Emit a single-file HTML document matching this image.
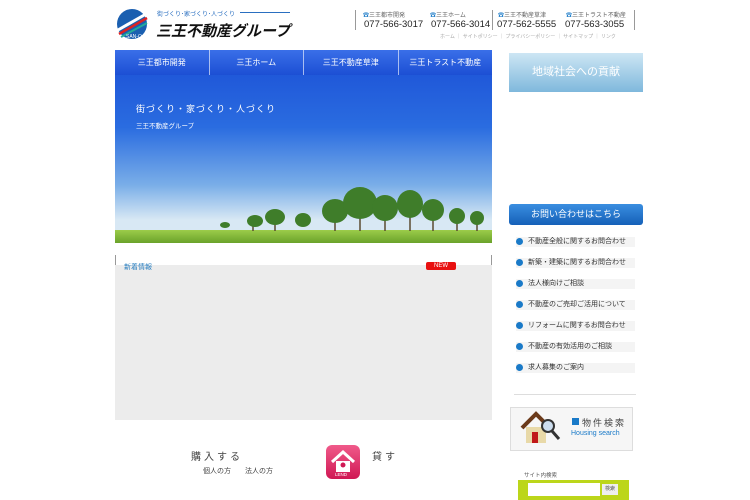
<!DOCTYPE html><html><head><meta charset="utf-8"><style>
*{margin:0;padding:0;box-sizing:border-box}
body{width:750px;height:500px;background:#fff;font-family:"Liberation Sans","Noto Sans CJK JP",sans-serif;position:relative;overflow:hidden}
.a{position:absolute}
.nav{left:115px;top:50px;width:377px;height:25px;display:flex}
.nav div{flex:1;color:#fff;font-size:8px;text-align:center;line-height:25px;border-right:1px solid rgba(255,255,255,.6)}
.nav div:last-child{border:none}
.tel{font-size:9.5px;color:#222;top:19px}
.tl{font-size:6px;color:#666;top:10px}
.side li{list-style:none;position:absolute;left:516px;width:119px;height:10px;font-size:7px;color:#333;line-height:10px;padding-left:12px;background:#f4f4f4}
.side li:before{content:"";position:absolute;left:0;top:1px;width:7px;height:7px;border-radius:50%;background:#1a7ac8}
</style></head><body>
<svg class="a" style="left:116px;top:8px" width="36" height="32"><circle cx="16" cy="16" r="15" fill="#1a5fb0"/><path d="M2 22 L30 6" stroke="#fff" stroke-width="3"/><path d="M3 26 L31 10" stroke="#d22" stroke-width="2.5"/><path d="M5 29 L31 15" stroke="#2a9" stroke-width="2"/><text x="10" y="30" font-size="5" fill="#fff" font-family="Liberation Sans">SAN-O</text></svg>
<div class="a" style="left:157px;top:9px;font-size:6px;color:#2a6fc0">街づくり･家づくり･人づくり</div>
<div class="a" style="left:240px;top:12px;width:50px;height:1px;background:#2a6fc0"></div>
<div class="a" style="left:156px;top:20px;font-size:15px;font-weight:bold;font-style:italic;color:#111">三王不動産グループ</div>
<div class="a" style="left:355px;top:10px;width:1px;height:20px;background:#999"></div>
<div class="a" style="left:492px;top:10px;width:1px;height:20px;background:#999"></div>
<div class="a" style="left:634px;top:10px;width:1px;height:20px;background:#999"></div>
<div class="a tl" style="left:363px"><span style="color:#1a7ac8">☎</span>三王都市開発</div>
<div class="a tl" style="left:430px"><span style="color:#1a7ac8">☎</span>三王ホーム</div>
<div class="a tl" style="left:498px"><span style="color:#1a7ac8">☎</span>三王不動産草津</div>
<div class="a tl" style="left:566px"><span style="color:#1a7ac8">☎</span>三王トラスト不動産</div>
<div class="a tel" style="left:364px">077-566-3017</div>
<div class="a tel" style="left:431px">077-566-3014</div>
<div class="a tel" style="left:497px">077-562-5555</div>
<div class="a tel" style="left:565px">077-563-3055</div>
<div class="a" style="left:440px;top:33px;font-size:5px;color:#aaa;white-space:nowrap">ホーム ｜ サイトポリシー ｜ プライバシーポリシー ｜ サイトマップ ｜ リンク</div>
<div class="a" style="left:115px;top:50px;width:377px;height:193px;background:linear-gradient(#1b4fd6 0%,#2a6ce0 40%,#7aaee8 70%,#d8e8f4 88%)"></div>
<div class="a" style="left:115px;top:230px;width:377px;height:13px;background:linear-gradient(#9ccc4a,#6aa22a)"></div>
<svg class="a" style="left:115px;top:175px" width="377" height="58"><g stroke="#5a4a30" stroke-width="1.5"><path d="M138 48V56M160 44V56M220 36V56M245 30V56M270 34V56M295 32V56M318 38V56M342 42V56M362 44V56"/></g><g fill="#3f7d2a"><ellipse cx="140" cy="46" rx="8" ry="6"/><ellipse cx="160" cy="42" rx="10" ry="8"/><ellipse cx="188" cy="45" rx="8" ry="7"/><ellipse cx="220" cy="36" rx="13" ry="12"/><ellipse cx="245" cy="28" rx="17" ry="16"/><ellipse cx="270" cy="33" rx="13" ry="13"/><ellipse cx="295" cy="29" rx="13" ry="14"/><ellipse cx="318" cy="35" rx="11" ry="11"/><ellipse cx="342" cy="41" rx="8" ry="8"/><ellipse cx="362" cy="43" rx="7" ry="7"/><ellipse cx="110" cy="50" rx="5" ry="3"/></g></svg>
<div class="a nav" style="background:linear-gradient(#3a6fe8,#1c4fd4)"><div>三王都市開発</div><div>三王ホーム</div><div>三王不動産草津</div><div>三王トラスト不動産</div></div>
<div class="a" style="left:136px;top:102px;font-size:9px;color:#fff;letter-spacing:1px">街づくり・家づくり・人づくり</div>
<div class="a" style="left:136px;top:120px;font-size:6.5px;color:#fff">三王不動産グループ</div>
<div class="a" style="left:115px;top:255px;width:377px;height:165px;background:#ececec"></div>
<div class="a" style="left:115px;top:255px;width:377px;height:10px;background:#fff;border-left:1px solid #999;border-right:1px solid #999"></div>
<div class="a" style="left:124px;top:262px;font-size:7px;color:#2a7fc0">新着情報</div>
<div class="a" style="left:426px;top:262px;width:30px;height:8px;background:#e81010;border-radius:2px;color:#fff;font-size:6px;text-align:center;line-height:8px">NEW</div>
<div class="a" style="left:191px;top:448px;font-size:10px;color:#444;letter-spacing:3px">購入する</div>
<div class="a" style="left:203px;top:466px;font-size:7px;color:#444">個人の方　　法人の方</div>
<div class="a" style="left:326px;top:445px;width:34px;height:34px;border-radius:6px;background:linear-gradient(#f05a8a,#d01854)"><svg width="34" height="34"><path d="M6 17 L17 7 L28 17" stroke="#fff" stroke-width="3" fill="none"/><rect x="10" y="16" width="14" height="11" fill="#fff"/><circle cx="17" cy="20" r="2.5" fill="#d01854"/><text x="9" y="31" font-size="4.5" fill="#fff" font-family="Liberation Sans">LEND</text></svg></div>
<div class="a" style="left:372px;top:448px;font-size:10px;color:#444;letter-spacing:3px">貸す</div>
<div class="a" style="left:509px;top:53px;width:134px;height:39px;background:linear-gradient(#cde6f4,#7fb8dc);color:#fff;font-size:11px;text-align:center;line-height:39px">地域社会への貢献</div>
<div class="a" style="left:509px;top:204px;width:134px;height:21px;background:linear-gradient(#3a8ee0,#1560b8);border-radius:3px;color:#fff;font-size:9px;text-align:center;line-height:21px">お問い合わせはこちら</div>
<ul class="side"><li style="top:237px">不動産全般に関するお問合わせ</li><li style="top:258px">新築・建築に関するお問合わせ</li><li style="top:279px">法人様向けご相談</li><li style="top:300px">不動産のご売却ご活用について</li><li style="top:321px">リフォームに関するお問合わせ</li><li style="top:342px">不動産の有効活用のご相談</li><li style="top:363px">求人募集のご案内</li></ul>
<div class="a" style="left:514px;top:394px;width:122px;height:1px;background:#ddd"></div>
<div class="a" style="left:510px;top:407px;width:123px;height:44px;border:1px solid #ddd;background:#f6f6f6"></div>
<svg class="a" style="left:520px;top:410px" width="42" height="36"><path d="M2 18 L16 4 L30 18" stroke="#6b3a1a" stroke-width="4" fill="none"/><rect x="6" y="17" width="20" height="16" fill="#e8d9a8"/><rect x="12" y="22" width="6" height="11" fill="#c01818"/><circle cx="28" cy="16" r="6" fill="#cde" stroke="#333" stroke-width="2"/><path d="M32 21 L39 29" stroke="#333" stroke-width="3"/></svg>
<div class="a" style="left:572px;top:418px;width:7px;height:7px;background:#1a7ac8"></div>
<div class="a" style="left:582px;top:416px;font-size:9px;color:#444;letter-spacing:2px">物件検索</div>
<div class="a" style="left:571px;top:430px;font-size:7px;color:#1a7ac8">Housing search</div>
<div class="a" style="left:524px;top:471px;font-size:5.5px;color:#555">サイト内検索</div>
<div class="a" style="left:518px;top:480px;width:111px;height:20px;background:#bcd61a"></div>
<div class="a" style="left:528px;top:483px;width:72px;height:13px;background:#fff"></div>
<div class="a" style="left:602px;top:484px;width:16px;height:11px;background:#eee;font-size:5px;text-align:center;line-height:11px;color:#555">検索</div>
</body></html>
